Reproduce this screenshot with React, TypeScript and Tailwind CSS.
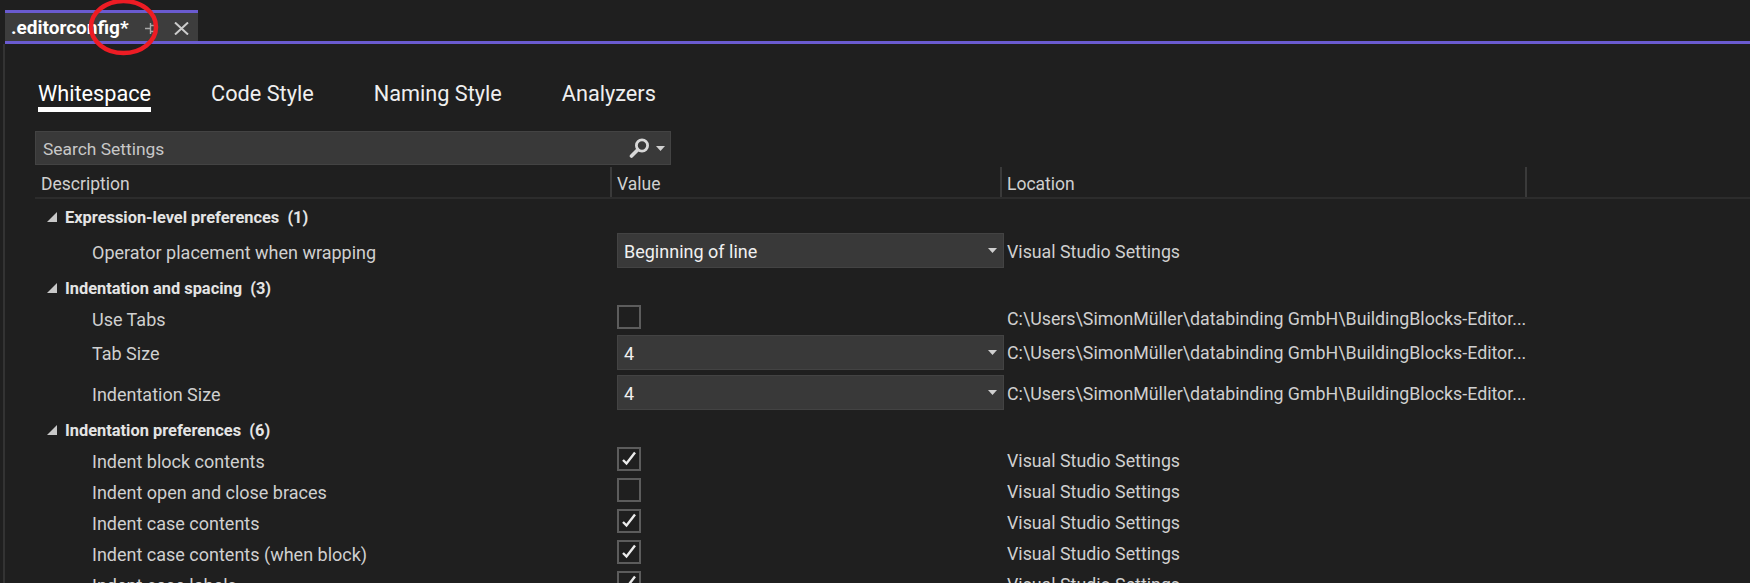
import React from "react";

const font = "font-['Roboto','Liberation_Sans',sans-serif]";

const TABS = [
  { name: "Whitespace", active: true },
  { name: "Code Style", active: false },
  { name: "Naming Style", active: false },
  { name: "Analyzers", active: false },
];

const USER_PATH = "C:\\Users\\SimonMüller\\databinding GmbH\\BuildingBlocks-Editor...";
const VS = "Visual Studio Settings";

function Arrow() {
  return (
    <svg width="9" height="5" viewBox="0 0 9 5" className="shrink-0">
      <path d="M0 0h9L4.5 5z" fill="#d0d0d0" />
    </svg>
  );
}

function Group({ title, className }: { title: string; className: string }) {
  return (
    <div className={`flex items-center whitespace-pre pl-[12px] font-bold text-[16.4px] text-[#e4e4e4] ${className}`}>
      <svg width="10" height="10" viewBox="0 0 10 10" className="mb-[3px] mr-[8px] shrink-0">
        <path d="M10 0v10H0z" fill="#c8c8c8" />
      </svg>
      {title}
    </div>
  );
}

function Combo({ value }: { value: string }) {
  return (
    <div className="flex h-[35px] w-[387px] items-center justify-between border border-[#434343] bg-[#393939] pl-[6px] pr-[6px] text-[#f0f0f0]">
      <span className="pt-[2px]">{value}</span>
      <Arrow />
    </div>
  );
}

function Checkbox({ checked }: { checked: boolean }) {
  return (
    <div className="flex h-[24px] w-[24px] items-center justify-center border-2 border-[#5c5c5c]">
      {checked && (
        <svg width="20" height="20" viewBox="0 0 20 20">
          <path d="M4 11l3.5 3.5L16 3.5" fill="none" stroke="#ececec" strokeWidth="2.4" />
        </svg>
      )}
    </div>
  );
}

function Row({
  label,
  location,
  className,
  shift = "pt-[4px]",
  children,
}: {
  label: string;
  location: string;
  className: string;
  shift?: string;
  children: React.ReactNode;
}) {
  return (
    <div className={`flex items-center ${className}`}>
      <div className={`w-[582px] shrink-0 pl-[57px] text-[#d0d0d0] ${shift}`}>{label}</div>
      <div className="w-[390px] shrink-0">{children}</div>
      <div className={`shrink-0 whitespace-nowrap text-[17.8px] text-[#d0d0d0] ${shift}`}>{location}</div>
    </div>
  );
}

export default function App() {
  return (
    <div className={`relative h-[583px] w-[1750px] overflow-hidden bg-[#1f1f1f] text-[18px] ${font}`}>
      <div className="ml-[5px] mt-[10px] flex h-[31px] w-[193px] items-center border-t-[3px] border-[#6a5bd0] bg-[#3d3d3d] pl-[6px] text-white">
        <span className="w-[134px] pt-[3px] font-bold text-[19px]">.editorconfig*</span>
        <svg width="12" height="12" viewBox="0 0 12 12" className="mr-[17px] mt-[4px]">
          <path d="M0 5.5h5M5.5 0v11M5.5 2.5h5v6h-5" fill="none" stroke="#a8a8a8" strokeWidth="1.4" />
        </svg>
        <svg width="15" height="13" viewBox="0 0 15 13" className="mt-[3px]">
          <path d="M1 .5l13 12M14 .5l-13 12" fill="none" stroke="#cccccc" strokeWidth="2" />
        </svg>
      </div>
      <div className="ml-[5px] h-[3px] bg-[#6a5bd0]" />

      <div className="ml-[3px] flex h-[539px] border-l-2 border-[#333333]">
        <div className="flex-1 pl-[30px]">
          <div className="ml-[3px] mt-[32px] flex h-[36px] gap-[60px] text-[21.7px] text-[#efefef]">
            {TABS.map((t) => (
              <div key={t.name} className={t.active ? "border-b-[5px] border-white pt-[2px] text-white" : "pt-[2px]"}>{t.name}</div>
            ))}
          </div>

          <div className="mt-[19px] flex h-[34px] w-[636px] items-center justify-between border border-[#434343] bg-[#393939] pl-[7px] pr-[5px] text-[17.4px] text-[#c8c8c8]">
            <span className="pt-[2px]">Search Settings</span>
            <div className="flex items-center gap-[6px]">
              <svg width="21" height="22" viewBox="0 0 21 22">
                <circle cx="13" cy="8.5" r="5.6" fill="none" stroke="#d8d8d8" strokeWidth="2.8" />
                <path d="M8.5 13 2.5 19" stroke="#d8d8d8" strokeWidth="3.6" strokeLinecap="round" />
              </svg>
              <Arrow />
            </div>
          </div>

          <div className="mt-[2px] flex h-[32px] items-center border-b-2 border-[#2c2c2c] text-[17.5px] text-[#d0d0d0]">
            <div className="flex h-full w-[577px] shrink-0 items-center border-r-2 border-[#3a3a3a] pl-[6px] pt-[4px]">Description</div>
            <div className="flex h-full w-[390px] shrink-0 items-center border-r-2 border-[#3a3a3a] pl-[5px] pt-[4px]">Value</div>
            <div className="flex h-full w-[525px] shrink-0 items-center border-r-2 border-[#3a3a3a] pl-[5px] pt-[4px]">Location</div>
          </div>

          <Group title="Expression-level preferences  (1)" className="h-[34px] pt-[4px]" />
          <Row label="Operator placement when wrapping" location={VS} className="h-[35px]">
            <Combo value="Beginning of line" />
          </Row>
          <Group title="Indentation and spacing  (3)" className="h-[37px] pt-[5px]" />
          <Row label="Use Tabs" location={USER_PATH} className="h-[24px]">
            <Checkbox checked={false} />
          </Row>
          <Row label="Tab Size" location={USER_PATH} className="mt-[6px] h-[35px]" shift="pt-[1px]">
            <Combo value="4" />
          </Row>
          <Row label="Indentation Size" location={USER_PATH} className="mt-[5px] h-[35px]" shift="pt-[3px]">
            <Combo value="4" />
          </Row>
          <Group title="Indentation preferences  (6)" className="h-[37px] pt-[5px]" />
          <Row label="Indent block contents" location={VS} className="mb-[7px] h-[24px]">
            <Checkbox checked />
          </Row>
          <Row label="Indent open and close braces" location={VS} className="mb-[7px] h-[24px]">
            <Checkbox checked={false} />
          </Row>
          <Row label="Indent case contents" location={VS} className="mb-[7px] h-[24px]">
            <Checkbox checked />
          </Row>
          <Row label="Indent case contents (when block)" location={VS} className="mb-[7px] h-[24px]">
            <Checkbox checked />
          </Row>
          <Row label="Indent case labels" location={VS} className="mb-[7px] h-[24px]">
            <Checkbox checked />
          </Row>
        </div>
      </div>

      {/* hand drawn annotation over the tab */}
      <svg width="80" height="60" viewBox="0 0 80 60" className="absolute left-[85px] top-0">
        <ellipse cx="38.5" cy="27" rx="32.5" ry="26" fill="none" stroke="#ed1c24" strokeWidth="4.5" />
      </svg>
    </div>
  );
}
